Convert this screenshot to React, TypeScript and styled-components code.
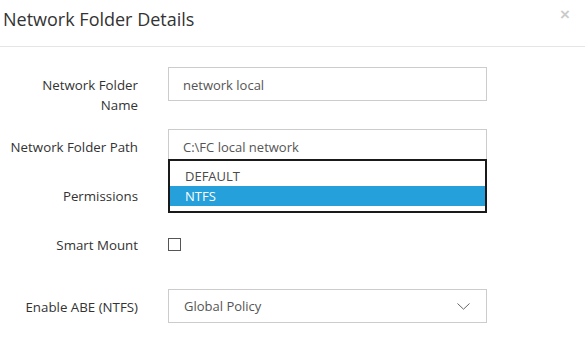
import styled, { createGlobalStyle } from "styled-components";

const GlobalStyle = createGlobalStyle`
  body {
    margin: 0;
    background: #fff;
    font-family: "Open Sans", "Noto Sans", sans-serif;
  }
`;

const Modal = styled.div`
  width: 585px;
  height: 341px;
  background: #fff;
  overflow: hidden;
`;

const Header = styled.div`
  display: flex;
  justify-content: space-between;
  align-items: flex-start;
  height: 46px;
  padding: 0 15px 0 3px;
  border-bottom: 1px solid #e5e5e5;
`;

const Title = styled.h4`
  margin: 0;
  padding-top: 7px;
  font-size: 18px;
  font-weight: 400;
  line-height: 24px;
  color: #333;
`;

const Close = styled.span`
  padding-top: 3px;
  font-family: "Liberation Sans", Arial, sans-serif;
  font-size: 17px;
  font-weight: 700;
  line-height: 24px;
  color: #000;
  opacity: 0.2;
`;

const Body = styled.div`
  padding-top: 20px;
`;

interface RowProps {
  $space?: number;
}

const FormRow = styled.div<RowProps>`
  display: grid;
  grid-template-columns: 138px 319px;
  column-gap: 30px;
  align-items: start;
  margin-bottom: ${(props) => (props.$space !== undefined ? props.$space : 15)}px;
`;

const Label = styled.label`
  padding-top: 8px;
  text-align: right;
  font-size: 13.3px;
  line-height: 20px;
  color: #333;
`;

const Control = styled.div`
  position: relative;
`;

const TextInput = styled.div`
  box-sizing: border-box;
  height: 34px;
  padding: 0 14px;
  border: 1px solid #ccc;
  font-size: 13px;
  line-height: 34px;
  color: #555;
`;

const SelectBox = styled(TextInput)`
  display: flex;
  justify-content: space-between;
  align-items: center;
  padding: 0 16px 0 15px;
`;

const DropList = styled.ul`
  position: absolute;
  top: 30px;
  left: 0;
  right: 0;
  z-index: 2;
  margin: 0;
  padding: 5px 0;
  list-style: none;
  background: #fff;
  border: 2px solid #1a1a1a;
`;

interface OptionProps {
  $selected?: boolean;
}

const Option = styled.li<OptionProps>`
  height: 20px;
  padding-left: 15px;
  font-size: 13px;
  line-height: 20px;
  color: ${(props) => (props.$selected ? "#fff" : "#4a4a4a")};
  background: ${(props) => (props.$selected ? "#26a0da" : "transparent")};
`;

const Checkbox = styled.span`
  display: block;
  box-sizing: border-box;
  width: 13px;
  height: 13px;
  margin-top: 11px;
  border: 1px solid #555;
  background: #fff;
`;

const Chevron = () => (
  <svg width="13" height="7" viewBox="0 0 13 7">
    <polyline
      points="0.5,0.5 6.5,6.2 12.5,0.5"
      fill="none"
      stroke="#666"
      strokeWidth="1"
    />
  </svg>
);

export default function App() {
  return (
    <Modal>
      <GlobalStyle />
      <Header>
        <Title>Network Folder Details</Title>
        <Close>×</Close>
      </Header>
      <Body>
        <FormRow $space={14}>
          <Label>
            Network Folder
            <br />
            Name
          </Label>
          <TextInput>network local</TextInput>
        </FormRow>
        <FormRow>
          <Label>Network Folder Path</Label>
          <Control>
            <TextInput>C:\FC local network</TextInput>
            <DropList>
              <Option>DEFAULT</Option>
              <Option $selected>NTFS</Option>
            </DropList>
          </Control>
        </FormRow>
        <FormRow>
          <Label>Permissions</Label>
          <SelectBox>
            NTFS
            <Chevron />
          </SelectBox>
        </FormRow>
        <FormRow $space={34}>
          <Label>Smart Mount</Label>
          <Checkbox />
        </FormRow>
        <FormRow>
          <Label>Enable ABE (NTFS)</Label>
          <SelectBox>
            Global Policy
            <Chevron />
          </SelectBox>
        </FormRow>
      </Body>
    </Modal>
  );
}
